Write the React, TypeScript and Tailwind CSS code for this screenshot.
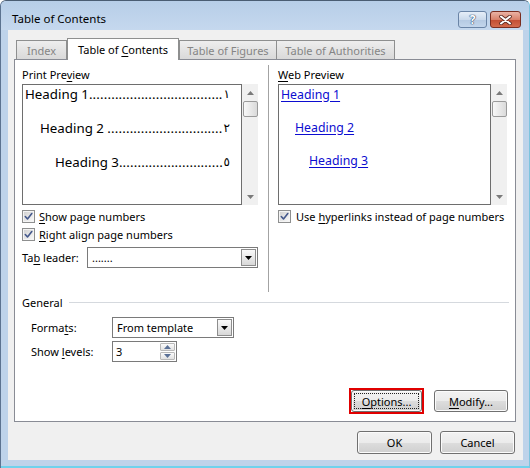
import React from "react";

const U = ({ children }: { children: React.ReactNode }) => (
  <span className="underline decoration-1 underline-offset-[2px]">{children}</span>
);

function CheckBox() {
  return (
    <div className="w-[13px] h-[13px] shrink-0 border border-[#8e8f8f] bg-[#f4f4f4] p-[1px]">
      <div className="w-full h-full bg-gradient-to-br from-[#d2d2d2] to-[#f8f8f8] flex items-center justify-center">
        <svg width="9" height="9" viewBox="0 0 9 9">
          <path d="M1.3 4.5 L3.5 7 L7.8 1.5" stroke="#45598c" strokeWidth="1.6" fill="none" strokeLinecap="round" strokeLinejoin="round" />
        </svg>
      </div>
    </div>
  );
}

function Up({ c }: { c: string }) {
  return (
    <svg width="7" height="4" viewBox="0 0 7 4">
      <path d="M0 4L3.5 0L7 4Z" fill={c} />
    </svg>
  );
}
function Down({ c }: { c: string }) {
  return (
    <svg width="7" height="4" viewBox="0 0 7 4">
      <path d="M0 0L7 0L3.5 4Z" fill={c} />
    </svg>
  );
}

function VScroll() {
  return (
    <div className="w-[16px] h-full bg-[#f0f0f0] flex flex-col items-center shrink-0">
      <div className="h-[17px] w-full flex items-center justify-center">
        <Up c="#7a7a7a" />
      </div>
      <div className="w-[15px] h-[16px] rounded-[2px] border border-[#9a9a9a] bg-gradient-to-r from-[#f8f8f8] to-[#dadada]" />
      <div className="flex-1" />
      <div className="h-[17px] w-full flex items-center justify-center">
        <Down c="#7a7a7a" />
      </div>
    </div>
  );
}

function TocRow({ label, dots, num, cls }: { label: string; dots: number; num: string; cls: string }) {
  return (
    <div className={`h-[18px] flex items-center pr-[11px] text-[13.3px] ${cls}`}>
      <span className="whitespace-pre">{label}</span>
      <span className="flex-1 min-w-0 whitespace-nowrap text-left tracking-[0.15px]">{".".repeat(dots)}</span>
      <span className="font-['DejaVu_Sans',sans-serif] text-[12px] ml-[1px]">{num}</span>
    </div>
  );
}

function Select({ text, cls }: { text: string; cls: string }) {
  return (
    <div className={`h-[21px] border border-[#7a7a7a] bg-white flex ${cls}`}>
      <div className="flex-1 flex items-center pl-[4px]">{text}</div>
      <div className="w-[17px] h-full p-[1px]">
        <div className="w-full h-full border border-[#8d8d8d] bg-gradient-to-b from-[#fafafa] to-[#d8d8d8] flex items-center justify-center">
          <Down c="#000" />
        </div>
      </div>
    </div>
  );
}

const btn =
  "h-[22px] rounded-[3px] border border-[#707070] bg-[linear-gradient(to_bottom,#f2f2f2_0%,#ebebeb_50%,#dddddd_51%,#cfcfcf_100%)] shadow-[inset_0_0_0_1px_#fbfbfb] flex items-center justify-center";

const tabOff =
  "h-[19px] mb-[1px] pt-[1px] border border-b-0 border-[#8e8f8f] bg-gradient-to-b from-[#eeeeee] to-[#d9d9d9] text-[#858585] flex items-center justify-center whitespace-nowrap";

export default function App() {
  return (
    <div className="w-[530px] h-[468px] bg-white font-['Noto_Sans','DejaVu_Sans',sans-serif] text-[11px] text-black leading-[15px]">
      <div className="w-[530px] h-[468px] rounded-t-[6px] border-t border-l border-r border-t-[#4a5d73] border-l-[#5c7390] border-r-[#7cc4de] bg-[#bed3ea] flex flex-col overflow-hidden">
        {/* title bar */}
        <div className="h-[29px] shrink-0 flex items-start bg-gradient-to-b from-[#b7cee8] to-[#c5d8ee]">
          <div className="pl-[11px] pt-[10px] flex-1 text-[11.5px]">Table of Contents</div>
          <div className="pt-[10px] pr-[8px] flex gap-[3px]">
            <div className="w-[29px] h-[17px] rounded-[3px] border border-[#6a84a6] bg-[linear-gradient(to_bottom,#e6eef8_0%,#cbdaec_50%,#b4c9e2_51%,#c3d6ec_100%)] flex items-center justify-center">
              <span className="text-white font-bold text-[12px] leading-[12px] [text-shadow:0_0_1px_#29456b,0_0_1px_#29456b,0_0_1px_#29456b]">?</span>
            </div>
            <div className="w-[31px] h-[17px] rounded-[3px] border border-[#7a2d20] bg-[linear-gradient(to_bottom,#eab3a5_0%,#d9826c_50%,#c24c31_51%,#d36a4c_100%)] flex items-center justify-center">
              <svg width="13" height="10" viewBox="0 0 13 10">
                <path d="M2 1.5 L11 8.5 M11 1.5 L2 8.5" stroke="#5a2a22" strokeWidth="3.6" strokeLinecap="round" />
                <path d="M2 1.5 L11 8.5 M11 1.5 L2 8.5" stroke="#ffffff" strokeWidth="2" strokeLinecap="round" />
              </svg>
            </div>
          </div>
        </div>

        {/* client area */}
        <div className="w-[515px] h-[430px] ml-[7px] bg-[#f0f0f0] flex flex-col shrink-0">
          <div className="ml-[6px] mt-[8px] w-[502px]">
            {/* tabs */}
            <div className="h-[22px] flex items-end pl-[2px] relative z-10 mb-[-1px]">
              <div className={`${tabOff} w-[51px]`}>Index</div>
              <div className="w-[112px] h-[22px] border border-b-0 border-[#8e8f8f] bg-white flex items-center justify-center whitespace-nowrap">
                <span>
                  Table of <U>C</U>ontents
                </span>
              </div>
              <div className={`${tabOff} w-[98px]`}>Table of Figures</div>
              <div className={`${tabOff} w-[118px] border-l-0`}>Table of Authorities</div>
            </div>

            {/* panel */}
            <div className="w-[502px] h-[363px] border border-[#898c95] bg-white flex flex-col">
              {/* top section */}
              <div className="flex pt-[5px] h-[232px]">
                {/* left column */}
                <div className="ml-[7px] w-[236px] flex flex-col">
                  <div className="h-[19px] flex items-center">
                    <span>
                      Print Pre<U>v</U>iew
                    </span>
                  </div>
                  <div className="h-[121px] flex">
                    <div className="w-[220px] h-full border border-[#6e6e6e] bg-white flex flex-col gap-[16px]">
                      <TocRow label="Heading 1" dots={36} num="١" cls="pl-[2px]" />
                      <TocRow label={"Heading 2\u00a0"} dots={31} num="٢" cls="pl-[17px]" />
                      <TocRow label="Heading 3" dots={28} num="٥" cls="pl-[32px]" />
                    </div>
                    <VScroll />
                  </div>
                  <div className="mt-[2px] h-[18px] flex items-center gap-[4px]">
                    <CheckBox />
                    <span>
                      <U>S</U>how page numbers
                    </span>
                  </div>
                  <div className="h-[19px] flex items-center gap-[4px]">
                    <CheckBox />
                    <span>
                      <U>R</U>ight align page numbers
                    </span>
                  </div>
                  <div className="mt-[3px] h-[21px] flex items-center">
                    <div className="w-[65px]">
                      Ta<U>b</U> leader:
                    </div>
                    <Select text="......." cls="w-[171px]" />
                  </div>
                </div>

                {/* divider */}
                <div className="w-[10px]" />
                <div className="w-[1px] h-[227px] bg-[#a3a3a3]" />
                <div className="w-[9px]" />

                {/* right column */}
                <div className="w-[229px] flex flex-col">
                  <div className="h-[19px] flex items-center">
                    <span>
                      <U>W</U>eb Preview
                    </span>
                  </div>
                  <div className="h-[121px] flex">
                    <div className="w-[213px] h-full border border-[#6e6e6e] bg-white flex flex-col gap-[15px] text-[12.3px] text-[#0c0cd0]">
                      <div className="h-[18px] flex items-center pl-[2px]">
                        <span className="underline underline-offset-[2px]">Heading 1</span>
                      </div>
                      <div className="h-[18px] flex items-center pl-[16px]">
                        <span className="underline underline-offset-[2px]">Heading 2</span>
                      </div>
                      <div className="h-[18px] flex items-center pl-[30px]">
                        <span className="underline underline-offset-[2px]">Heading 3</span>
                      </div>
                    </div>
                    <VScroll />
                  </div>
                  <div className="mt-[2px] h-[18px] flex items-center gap-[5px] whitespace-nowrap">
                    <CheckBox />
                    <span>
                      Use <U>h</U>yperlinks instead of page numbers
                    </span>
                  </div>
                </div>
              </div>

              {/* General */}
              <div className="mt-[2px] h-[16px] flex items-center ml-[7px] mr-[6px]">
                <span>General</span>
                <div className="flex-1 h-[1px] bg-[#d5d9de] ml-[6px]" />
              </div>
              <div className="mt-[7px] h-[21px] flex items-center ml-[16px]">
                <div className="w-[81px]">
                  Forma<U>t</U>s:
                </div>
                <Select text="From template" cls="w-[122px]" />
              </div>
              <div className="mt-[3px] h-[21px] flex items-center ml-[16px]">
                <div className="w-[81px]">
                  Show <U>l</U>evels:
                </div>
                <div className="w-[65px] h-[21px] border border-[#7a7a7a] bg-white flex">
                  <div className="flex-1 pl-[3px] flex items-center">3</div>
                  <div className="w-[17px] flex flex-col p-[1px] gap-[1px]">
                    <div className="flex-1 border border-[#b9b9b9] rounded-[1px] bg-gradient-to-b from-[#fbfbfb] to-[#e2e2e2] flex items-center justify-center">
                      <Up c="#5b7197" />
                    </div>
                    <div className="flex-1 border border-[#b9b9b9] rounded-[1px] bg-gradient-to-b from-[#fbfbfb] to-[#e2e2e2] flex items-center justify-center">
                      <Down c="#5b7197" />
                    </div>
                  </div>
                </div>
              </div>

              {/* Options / Modify */}
              <div className="mt-[26px] flex items-center justify-end pr-[7px] gap-[10px]">
                <div className="w-[75px] h-[26px] border-2 border-[#e00000]">
                  <div className={`${btn} w-full h-full border-[#3c7fb1]`}>
                    <div className="w-[65px] h-[16px] border border-dotted border-[#222] flex items-center justify-center">
                      <span>
                        <U>O</U>ptions...
                      </span>
                    </div>
                  </div>
                </div>
                <div className={`${btn} w-[74px]`}>
                  <span>
                    <U>M</U>odify...
                  </span>
                </div>
              </div>
            </div>
          </div>

          {/* OK / Cancel */}
          <div className="mt-[9px] flex justify-end pr-[8px] gap-[8px]">
            <div className={`${btn} w-[75px] h-[23px]`}>OK</div>
            <div className={`${btn} w-[75px] h-[23px]`}>Cancel</div>
          </div>
        </div>
        <div className="h-[6px] shrink-0" />
        <div className="h-[2px] shrink-0 bg-[#6fd2ec]" />
      </div>
    </div>
  );
}
